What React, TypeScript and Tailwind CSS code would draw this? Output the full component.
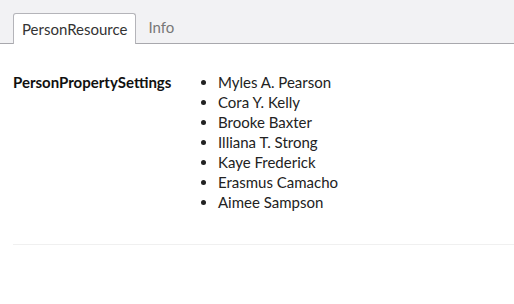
import React from 'react';

const people = [
  'Myles A. Pearson',
  'Cora Y. Kelly',
  'Brooke Baxter',
  'Illiana T. Strong',
  'Kaye Frederick',
  'Erasmus Camacho',
  'Aimee Sampson',
];

export default function App() {
  return (
    <div className="min-h-screen bg-white text-[#222] font-['Lato','Noto_Sans',sans-serif]">
      {/* Tabs */}
      <div className="flex items-end h-[44px] px-[13px] bg-[#f2f2f4] border-b border-[#a8a8ad]">
        <button className="h-[31px] -mb-px px-[8px] bg-white border border-b-0 border-[#b4b4b9] rounded-t-[3px] text-[15px] text-[#333]">
          PersonResource
        </button>
        <button className="h-[31px] px-[12px] text-[15px] text-[#777]">Info</button>
      </div>

      {/* Content */}
      <div className="pl-[13px] pt-[28px]">
        <div className="flex pb-[32px] border-b border-[#f0f0f0]">
          <div className="w-[180px] text-[15px] font-bold leading-[20px] text-[#111]">PersonPropertySettings</div>
          <ul className="list-disc pl-[25px] text-[15px] leading-[20px] text-[#222]">
            {people.map(p => (
              <li key={p}>{p}</li>
            ))}
          </ul>
        </div>
      </div>
    </div>
  );
}
